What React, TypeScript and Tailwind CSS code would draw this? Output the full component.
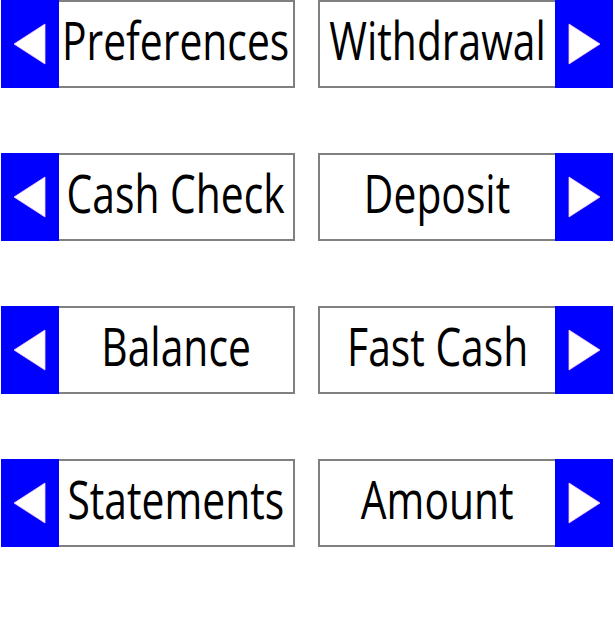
import React from "react";

const font = { fontFamily: '"Open Sans", "Noto Sans", sans-serif' };

function Arrow({ dir }: { dir: "left" | "right" }) {
  return (
    <div className="w-[58px] h-[88px] bg-[#0000ff] shrink-0">
      <svg width="58" height="88" viewBox="0 0 58 88">
        {dir === "left" ? (
          <polygon points="13,44 44,24 44,64" fill="#ffffff" stroke="#ffc8f0" strokeWidth="0.8" />
        ) : (
          <polygon points="45,44 14,24 14,64" fill="#ffffff" stroke="#ffc8f0" strokeWidth="0.8" />
        )}
      </svg>
    </div>
  );
}

function Label({ text, side }: { text: string; side: "left" | "right" }) {
  return (
    <div
      className={
        side === "left"
          ? "w-[236px] h-[88px] border-y-2 border-r-2 border-[#808080] bg-white flex items-center justify-center overflow-visible"
          : "w-[237px] h-[88px] border-y-2 border-l-2 border-[#808080] bg-white flex items-center justify-center overflow-visible"
      }
    >
      <span className="text-[53px] leading-none text-black whitespace-nowrap -translate-y-[5px] scale-x-[0.77] inline-block" style={font}>
        {text}
      </span>
    </div>
  );
}

const rows: [string, string][] = [
  ["Preferences", "Withdrawal"],
  ["Cash Check", "Deposit"],
  ["Balance", "Fast Cash"],
  ["Statements", "Amount"],
];

export default function App() {
  return (
    <div className="w-[615px] h-[626px] bg-white flex flex-col gap-[65px]">
      {rows.map(([l, r]) => (
        <div key={l} className="flex gap-[23px]">
          <div className="flex ml-px">
            <Arrow dir="left" />
            <Label text={l} side="left" />
          </div>
          <div className="flex">
            <Label text={r} side="right" />
            <Arrow dir="right" />
          </div>
        </div>
      ))}
    </div>
  );
}
